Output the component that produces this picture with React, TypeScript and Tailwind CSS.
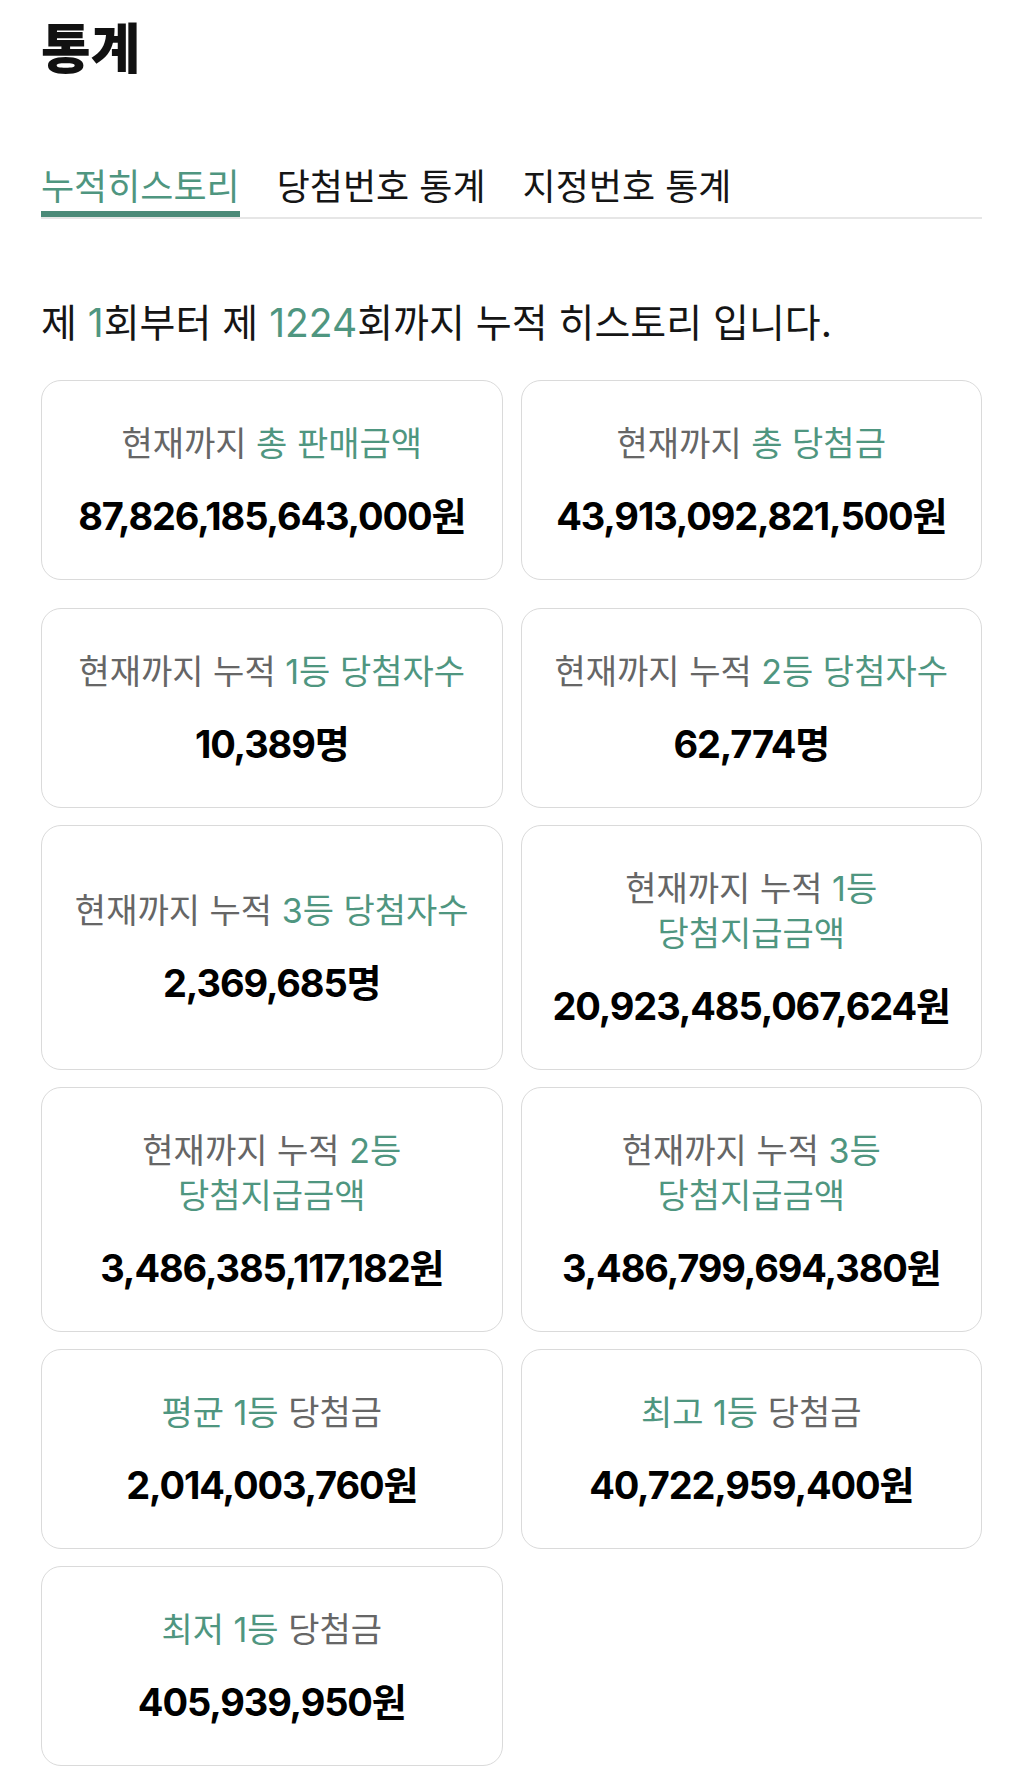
import React from "react";

type Part = { text: string; green?: boolean };

interface StatCard {
  label: Part[][];
  value: string;
}

const FONT = 'font-["Inter","Noto_Sans_CJK_KR",sans-serif]';

const summary: StatCard[] = [
  {
    label: [[{ text: "현재까지 " }, { text: "총 판매금액", green: true }]],
    value: "87,826,185,643,000원",
  },
  {
    label: [[{ text: "현재까지 " }, { text: "총 당첨금", green: true }]],
    value: "43,913,092,821,500원",
  },
];

const cards: StatCard[] = [
  {
    label: [[{ text: "현재까지 누적 " }, { text: "1등 당첨자수", green: true }]],
    value: "10,389명",
  },
  {
    label: [[{ text: "현재까지 누적 " }, { text: "2등 당첨자수", green: true }]],
    value: "62,774명",
  },
  {
    label: [[{ text: "현재까지 누적 " }, { text: "3등 당첨자수", green: true }]],
    value: "2,369,685명",
  },
  {
    label: [
      [{ text: "현재까지 누적 " }, { text: "1등", green: true }],
      [{ text: "당첨지급금액", green: true }],
    ],
    value: "20,923,485,067,624원",
  },
  {
    label: [
      [{ text: "현재까지 누적 " }, { text: "2등", green: true }],
      [{ text: "당첨지급금액", green: true }],
    ],
    value: "3,486,385,117,182원",
  },
  {
    label: [
      [{ text: "현재까지 누적 " }, { text: "3등", green: true }],
      [{ text: "당첨지급금액", green: true }],
    ],
    value: "3,486,799,694,380원",
  },
  {
    label: [[{ text: "평균 1등", green: true }, { text: " 당첨금" }]],
    value: "2,014,003,760원",
  },
  {
    label: [[{ text: "최고 1등", green: true }, { text: " 당첨금" }]],
    value: "40,722,959,400원",
  },
  {
    label: [[{ text: "최저 1등", green: true }, { text: " 당첨금" }]],
    value: "405,939,950원",
  },
];

function Card({ card }: { card: StatCard }) {
  return (
    <div className="flex flex-col items-center justify-center rounded-[20px] border-[1.5px] border-[#dadada] bg-white py-[39.5px] text-center">
      <div className="text-[34px] leading-[45px] text-[#666666]">
        {card.label.map((line, i) => (
          <div key={i}>
            {line.map((p, j) => (
              <span key={j} className={p.green ? "text-[#4f9680]" : undefined}>
                {p.text}
              </span>
            ))}
          </div>
        ))}
      </div>
      <div className="mt-[26px] text-[38px] font-bold leading-[48px] tracking-[-0.03em] text-black">
        {card.value}
      </div>
    </div>
  );
}

const tabs = ["누적히스토리", "당첨번호 통계", "지정번호 통계"];

export default function App() {
  return (
    <div className={`min-h-[1789px] bg-white pl-[41px] pr-[42px] pt-[21px] ${FONT}`}>
      {/* Title */}
      <h1 className="text-[54px] font-black leading-[58px] text-[#111]">통계</h1>

      {/* Tabs */}
      <div className="mt-[88px] flex gap-[37px] border-b-2 border-[#e6e6e6]">
        {tabs.map((t, i) => (
          <div key={t} className="flex flex-col">
            <span
              className={`mb-[4px] text-[36px] leading-[40px] ${
                i === 0 ? "text-[#4f9680]" : "text-[#151515]"
              }`}
            >
              {t}
            </span>
            <div className={`h-[6px] ${i === 0 ? "bg-[#4b8a78]" : "bg-transparent"}`} />
          </div>
        ))}
      </div>

      {/* Description */}
      <p className="mt-[82px] text-[39px] leading-[44px] text-[#151515]">
        제 <span className="text-[#4f9680]">1</span>회부터 제{" "}
        <span className="text-[#4f9680]">1224</span>회까지 누적 히스토리 입니다.
      </p>

      {/* Summary cards */}
      <div className="mt-[35px] grid grid-cols-2 gap-x-[18px]">
        {summary.map((c, i) => (
          <Card key={i} card={c} />
        ))}
      </div>

      {/* Detail cards */}
      <div className="mt-[28px] grid grid-cols-2 gap-x-[18px] gap-y-[17px]">
        {cards.map((c, i) => (
          <Card key={i} card={c} />
        ))}
      </div>
    </div>
  );
}
